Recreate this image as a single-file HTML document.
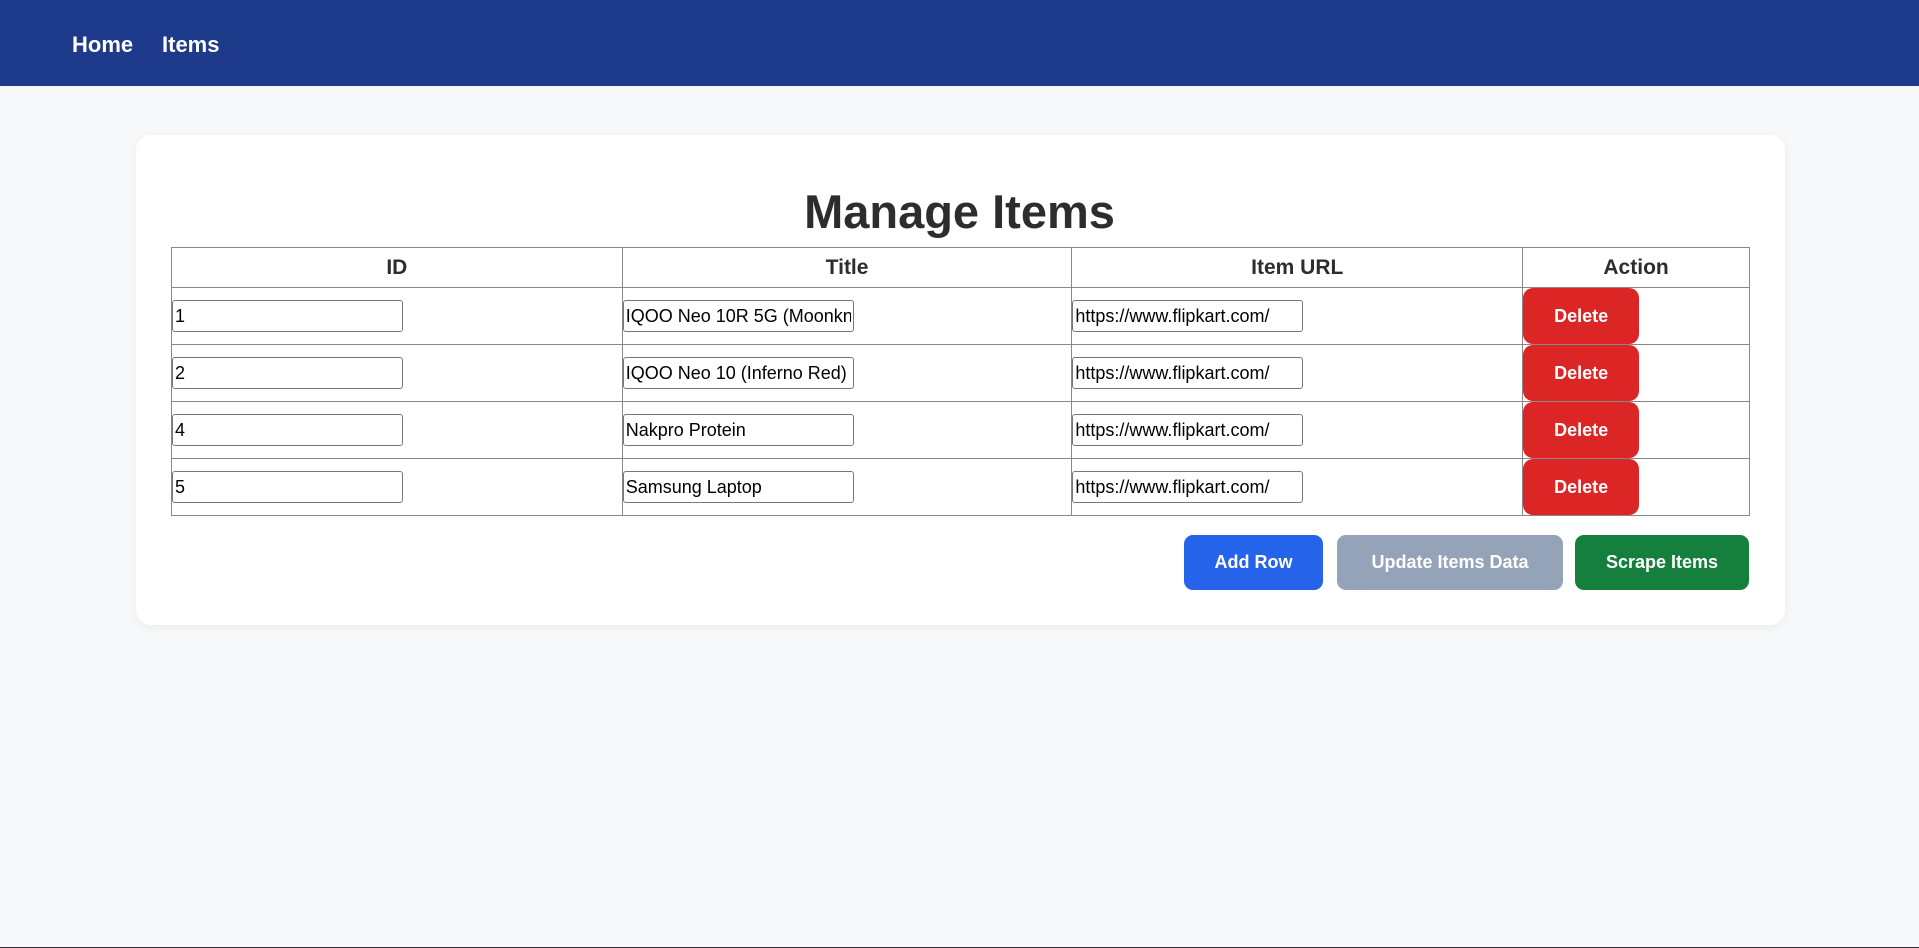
<!DOCTYPE html>
<html><head><meta charset="utf-8"><style>
*{box-sizing:border-box}
body{margin:0;width:1919px;height:948px;background:#f7f8fa;font-family:"Liberation Sans",sans-serif;color:#2d2d2d;overflow:hidden;position:relative}
.nav{position:absolute;left:0;top:0;width:1919px;height:86px;background:#1e3a8a}
.nav a{position:absolute;top:32px;color:#fff;font-weight:bold;font-size:22px;text-decoration:none}
.card{position:absolute;left:136px;top:135px;width:1649px;height:490px;background:#fff;border-radius:15px;box-shadow:0 2px 10px rgba(0,0,0,0.05)}
h1{position:absolute;left:0;right:0;top:182px;margin:0;text-align:center;font-size:47px;font-weight:bold;color:#2d2d2d;line-height:60px}
table{position:absolute;left:171px;top:247px;width:1579px;border-collapse:collapse}
th,td{border:1px solid #888;padding:0}
th{height:40px;font-size:21px;font-weight:bold}
td{height:57px;vertical-align:middle}
input{display:block;width:231px;height:32px;border:1px solid #777;border-radius:3px;font-family:"Liberation Sans",sans-serif;font-size:18px;padding:0 2px;color:#000;background:#fff}
.del{display:block;width:116px;height:56px;background:#dc2626;color:#fff;border:none;border-radius:10px;font-weight:bold;font-size:18px;font-family:"Liberation Sans",sans-serif}
.b{position:absolute;top:535px;height:55px;border-radius:9px;color:#fff;font-weight:bold;font-size:18px;display:flex;align-items:center;justify-content:center}
.bl{position:absolute;left:0;bottom:0;width:1919px;height:1px;background:#333}
</style></head><body>
<div class="nav"><a style="left:72px">Home</a><a style="left:162px">Items</a></div>
<div class="card"></div>
<h1>Manage Items</h1>
<table>
<colgroup><col style="width:451px"><col style="width:450px"><col style="width:451px"><col style="width:227px"></colgroup>
<tr><th>ID</th><th>Title</th><th>Item URL</th><th>Action</th></tr>
<tr><td><input value="1"></td><td><input value="IQOO Neo 10R 5G (Moonknight Titanium)"></td><td><input value="https://www.flipkart.com/"></td><td><button class="del">Delete</button></td></tr>
<tr><td><input value="2"></td><td><input value="IQOO Neo 10 (Inferno Red)"></td><td><input value="https://www.flipkart.com/"></td><td><button class="del">Delete</button></td></tr>
<tr><td><input value="4"></td><td><input value="Nakpro Protein"></td><td><input value="https://www.flipkart.com/"></td><td><button class="del">Delete</button></td></tr>
<tr><td><input value="5"></td><td><input value="Samsung Laptop"></td><td><input value="https://www.flipkart.com/"></td><td><button class="del">Delete</button></td></tr>
</table>
<div class="b" style="left:1184px;width:139px;background:#2563eb">Add Row</div>
<div class="b" style="left:1337px;width:226px;background:#94a3b8">Update Items Data</div>
<div class="b" style="left:1575px;width:174px;background:#15803d">Scrape Items</div>
<div class="bl"></div>
</body></html>
